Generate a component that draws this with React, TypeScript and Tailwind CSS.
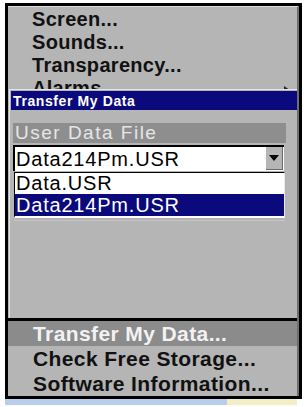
import React from "react";

const font = { fontFamily: '"Liberation Sans", Arial, sans-serif' };

function TopRow({ label, arrow }: { label: string; arrow?: boolean }) {
  return (
    <div className="flex h-[23px] shrink-0 items-center justify-between pl-[24px] pr-[8px] text-[20px] font-bold leading-[23px] tracking-[0.3px] text-[#111]">
      <span>{label}</span>
      {arrow && (
        <svg width="5" height="7" viewBox="0 0 5 7" className="mt-[1px]">
          <path d="M0 0 L5 3.5 L0 7 Z" fill="#222" />
        </svg>
      )}
    </div>
  );
}

function BottomRow({ label, active }: { label: string; active?: boolean }) {
  return (
    <div
      className={
        "flex h-[25px] shrink-0 items-center pl-[25px] text-[21px] font-bold leading-[24px] tracking-[0.4px] " +
        (active ? "bg-[#8b8b8b] text-[#f2f2f2]" : "text-[#111]")
      }
    >
      {label}
    </div>
  );
}

export default function App() {
  return (
    <div className="flex h-[407px] w-[304px] flex-col overflow-hidden bg-white" style={font}>
      <div className="ml-[5px] mt-[3px] h-[396px] w-[297px] shrink-0 border-[3px] border-black bg-[#b5b5b5]">
        <div className="flex h-full flex-col border-r-2 border-t border-r-[#6f6f6f] border-t-[#dedede]">
          {/* Top menu (partly hidden behind dialog) */}
          <div className="flex h-[82px] shrink-0 flex-col overflow-hidden pt-[1px]">
            <TopRow label="Screen..." />
            <TopRow label="Sounds..." />
            <TopRow label="Transparency..." />
            <TopRow label="Alarms..." arrow />
          </div>

          {/* Dialog */}
          <div className="ml-[1px] flex h-[229px] w-[288px] shrink-0 flex-col border-l border-t border-[#e4e4e4] pl-[1px] pt-[1px]">
            <div className="h-[19px] shrink-0 overflow-hidden bg-[#0a0a7c] pl-[2px] pt-[1px] text-[14px] font-bold leading-[19px] tracking-[0.6px] text-white">
              Transfer My Data
            </div>
            <div className="flex flex-col pt-[13px]">
              <div className="ml-[2px] h-[20px] w-[273px] bg-[#8e8e8e] pl-[2px] text-[19px] leading-[20px] tracking-[1.5px] text-[#e6e6e6]">
                User Data File
              </div>
              <div className="ml-[2px] mt-[2px] flex h-[26px] w-[271px] items-start border-l-2 border-t-2 border-black bg-white">
                <div className="flex-1 pl-[1px] text-[20px] leading-[24px] tracking-[0.8px] text-black">
                  Data214Pm.USR
                </div>
                <div className="mr-[1px] flex h-[23px] w-[17px] items-center justify-center border-b border-r border-[#6a6a6a] bg-[#b5b5b5]">
                  <svg width="10" height="6" viewBox="0 0 10 6">
                    <path d="M0 0 H10 L5 6 Z" fill="#000" />
                  </svg>
                </div>
              </div>
              <div className="ml-[3px] mt-[1px] flex w-[271px] flex-col border-l border-t border-black border-b-2 border-b-white border-r border-r-[#e8e8e8]">
                <div className="h-[21px] bg-white pl-[1px] text-[20px] leading-[21px] tracking-[0.8px] text-black">
                  Data.USR
                </div>
                <div className="h-[22px] bg-[#0a0a7c] pl-[1px] text-[20px] leading-[22px] tracking-[0.8px] text-white">
                  Data214Pm.USR
                </div>
              </div>
              <div className="ml-[3px] mt-[2px] h-px w-[271px] bg-[#c4c4c4]" />
            </div>
          </div>

          <div className="h-[3px] shrink-0 bg-black" />

          {/* Bottom menu */}
          <div className="flex flex-col">
            <BottomRow label="Transfer My Data..." active />
            <BottomRow label="Check Free Storage..." />
            <BottomRow label="Software Information..." />
          </div>
        </div>
      </div>

      {/* map strip peeking out below */}
      <div className="flex h-[6px] shrink-0">
        <div className="ml-[5px] w-[222px] bg-[#b9cdec]" />
        <div className="w-[70px] bg-[#f3efc4]" />
      </div>
    </div>
  );
}
